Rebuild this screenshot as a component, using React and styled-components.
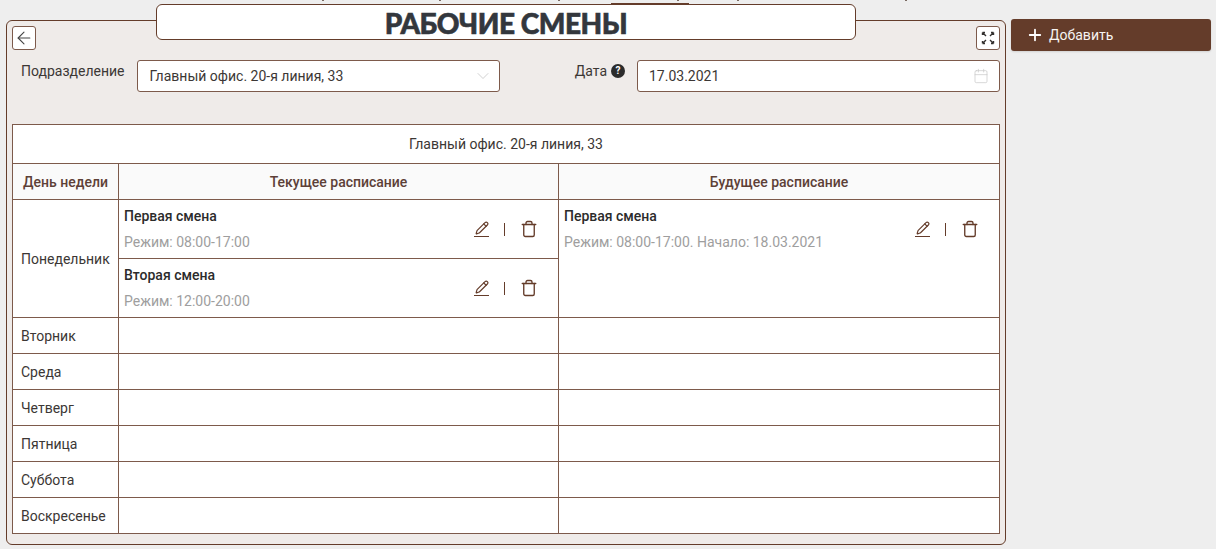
import React from 'react'
import styled, { createGlobalStyle } from 'styled-components'
import { ArrowLeft, Plus, ChevronDown, Calendar, Pencil, Trash } from 'lucide-react'

const brown = '#643c2a'
const line = '#7d5a4b'

const GlobalStyle = createGlobalStyle`
	html, body {
		margin: 0;
		padding: 0;
		background: #eeeeee;
		font-family: Roboto, "Liberation Sans", sans-serif;
		font-size: 14px;
		color: #33302e;
	}
`

const Page = styled.div`
	position: relative;
	width: 1216px;
	height: 549px;
	overflow: hidden;
	display: flex;
	align-items: flex-start;
	gap: 5px;
	padding: 20px 0 0 6px;
	box-sizing: border-box;
`

// what is left visible of the nav bar scrolled off above the page
const NavTick = styled.i`
	position: absolute;
	top: 0;
	left: ${p => p.$x}px;
	width: 2px;
	height: 1px;
	background: #7a6a62;
`

const NavActive = styled.i`
	position: absolute;
	top: 3px;
	left: 611px;
	width: 78px;
	height: 2px;
	background: ${brown};
`

const Panel = styled.section`
	position: relative;
	width: 1000px;
	height: 525px;
	box-sizing: border-box;
	background: #efebe9;
	border: 1px solid ${brown};
	border-radius: 6px;
	padding: 5px 5px 0;
`

const TitleBox = styled.h1`
	position: absolute;
	top: -17px;
	left: 149px;
	width: 700px;
	height: 36px;
	box-sizing: border-box;
	margin: 0;
	background: #fff;
	border: 1px solid ${brown};
	border-radius: 6px;
	text-align: center;
	font-family: Lato, sans-serif;
	font-weight: 900;
	font-size: 28px;
	line-height: 37px;
	color: #33373d;
	letter-spacing: -0.45px;
	-webkit-text-stroke: 0.6px #33373d;
`

const TopBar = styled.div`
	display: flex;
	justify-content: space-between;
	height: 24px;
`

const IconButton = styled.button`
	width: 24px;
	height: 24px;
	padding: 0;
	display: flex;
	align-items: center;
	justify-content: center;
	background: #fff;
	border: 1px solid ${line};
	border-radius: 3px;
	color: #444;
`

const Filters = styled.div`
	display: grid;
	grid-template-columns: 488px 1fr;
	margin-top: 10px;
	height: 32px;
`

const Field = styled.div`
	display: flex;
	justify-content: ${p => (p.$end ? 'flex-end' : 'flex-start')};
	gap: ${p => p.$gap}px;
	padding-left: ${p => p.$left || 0}px;
`

const Label = styled.label`
	display: flex;
	align-items: center;
	gap: 4px;
	height: 22px;
	color: #3c3735;
`

const Help = styled.span`
	width: 14px;
	height: 14px;
	border-radius: 50%;
	background: #2b2b2b;
	color: #fff;
	font-size: 10px;
	font-weight: 700;
	line-height: 14px;
	text-align: center;
`

const Input = styled.div`
	width: ${p => p.$width}px;
	height: 32px;
	box-sizing: border-box;
	display: flex;
	align-items: center;
	justify-content: space-between;
	padding: 0 10px 0 11px;
	background: #fff;
	border: 1px solid ${line};
	border-radius: 3px;
	color: #3c3735;
	svg {
		color: #c8c8c8;
	}
`

const SelectArrow = styled(ChevronDown)`
	margin-right: -4px;
`

const Table = styled.table`
	width: 987px;
	margin-top: 32px;
	border-collapse: collapse;
	table-layout: fixed;
	background: #fff;
`

const Caption = styled.td`
	height: 38px;
	padding: 0;
	border: 1px solid ${line};
	text-align: center;
	color: #3c3735;
`

const Head = styled.th`
	height: 35px;
	padding: 0;
	border: 1px solid ${line};
	background: #fafafa;
	text-align: center;
	font-weight: 500;
	color: #5d4037;
`

const Cell = styled.td`
	height: 35px;
	padding: 0;
	border: 1px solid ${line};
	vertical-align: top;
`

const Day = styled(Cell)`
	padding-left: 8px;
	vertical-align: middle;
	color: #3c3735;
`

const Shift = styled.div`
	box-sizing: border-box;
	height: 58px;
	display: flex;
	justify-content: space-between;
	padding: 8px 20px 0 5px;
	& + & {
		border-top: 1px solid ${line};
		height: 59px;
	}
`

const ShiftName = styled.div`
	font-weight: 500;
	line-height: 16px;
	color: #2b2b2b;
`

const ShiftMode = styled.div`
	margin-top: 10px;
	line-height: 16px;
	color: #9e9e9e;
`

const Actions = styled.div`
	display: flex;
	align-items: center;
	height: 26px;
	margin-top: 8px;
	color: ${brown};
`

const ActionDivider = styled.span`
	width: 1px;
	height: 13px;
	margin: 0 15px;
	background: ${brown};
`

const EditGlyph = styled.span`
	display: flex;
	flex-direction: column;
	width: 15px;
	margin-left: 1px;
	border-bottom: 1px solid ${brown};
	padding-bottom: 1px;
	align-items: center;
`

const AddButton = styled.button`
	width: 200px;
	height: 32px;
	margin-top: -1px;
	display: flex;
	align-items: center;
	gap: 5px;
	padding: 0 0 0 15px;
	background: ${brown};
	border: none;
	border-radius: 3px;
	box-shadow: 0 1px 2px rgba(0, 0, 0, 0.12);
	color: #f7f4f2;
	font-family: Roboto, sans-serif;
	font-size: 14px;
	svg {
		color: #fff;
	}
`

const ExpandIcon = () => (
	<svg width="14" height="14" viewBox="0 0 14 14" fill="none" stroke="#33302e" strokeWidth="1.4">
		<path d="M1.5 1.5l3.5 3.5M1.5 1.5h2.5M1.5 1.5v2.5M12.5 1.5L9 5M12.5 1.5h-2.5M12.5 1.5v2.5M1.5 12.5L5 9M1.5 12.5h2.5M1.5 12.5v-2.5M12.5 12.5L9 9M12.5 12.5h-2.5M12.5 12.5v-2.5" />
	</svg>
)

const ShiftRow = ({ name, mode }) => (
	<Shift>
		<div>
			<ShiftName>{name}</ShiftName>
			<ShiftMode>{mode}</ShiftMode>
		</div>
		<Actions>
			<EditGlyph>
				<Pencil size={14} strokeWidth={2} />
			</EditGlyph>
			<ActionDivider />
			<Trash size={18} strokeWidth={1.8} />
		</Actions>
	</Shift>
)

const emptyDays = ['Вторник', 'Среда', 'Четверг', 'Пятница', 'Суббота', 'Воскресенье']
const navTicks = [322, 439, 558, 677, 737, 905]

const App = () => (
	<Page>
		<GlobalStyle />
		{navTicks.map(x => (
			<NavTick key={x} $x={x} />
		))}
		<NavActive />
		<Panel>
			<TitleBox>РАБОЧИЕ СМЕНЫ</TitleBox>
			<TopBar>
				<IconButton>
					<ArrowLeft size={20} strokeWidth={1.3} />
				</IconButton>
				<IconButton>
					<ExpandIcon />
				</IconButton>
			</TopBar>
			<Filters>
				<Field $gap={13} $left={9}>
					<Label>Подразделение</Label>
					<Input $width={363}>
						Главный офис. 20-я линия, 33
						<SelectArrow size={20} strokeWidth={1} />
					</Input>
				</Field>
				<Field $end $gap={12}>
					<Label>
						Дата <Help>?</Help>
					</Label>
					<Input $width={363}>
						17.03.2021
						<Calendar size={16} strokeWidth={1.1} />
					</Input>
				</Field>
			</Filters>
			<Table>
				<colgroup>
					<col width="106" />
					<col width="440" />
					<col width="441" />
				</colgroup>
				<tbody>
					<tr>
						<Caption colSpan={3}>Главный офис. 20-я линия, 33</Caption>
					</tr>
					<tr>
						<Head>День недели</Head>
						<Head>Текущее расписание</Head>
						<Head>Будущее расписание</Head>
					</tr>
					<tr>
						<Day>Понедельник</Day>
						<Cell>
							<ShiftRow name="Первая смена" mode="Режим: 08:00-17:00" />
							<ShiftRow name="Вторая смена" mode="Режим: 12:00-20:00" />
						</Cell>
						<Cell>
							<ShiftRow name="Первая смена" mode="Режим: 08:00-17:00. Начало: 18.03.2021" />
						</Cell>
					</tr>
					{emptyDays.map(day => (
						<tr key={day}>
							<Day>{day}</Day>
							<Cell />
							<Cell />
						</tr>
					))}
				</tbody>
			</Table>
		</Panel>
		<AddButton>
			<Plus size={18} strokeWidth={2.4} />
			Добавить
		</AddButton>
	</Page>
)

export default App
